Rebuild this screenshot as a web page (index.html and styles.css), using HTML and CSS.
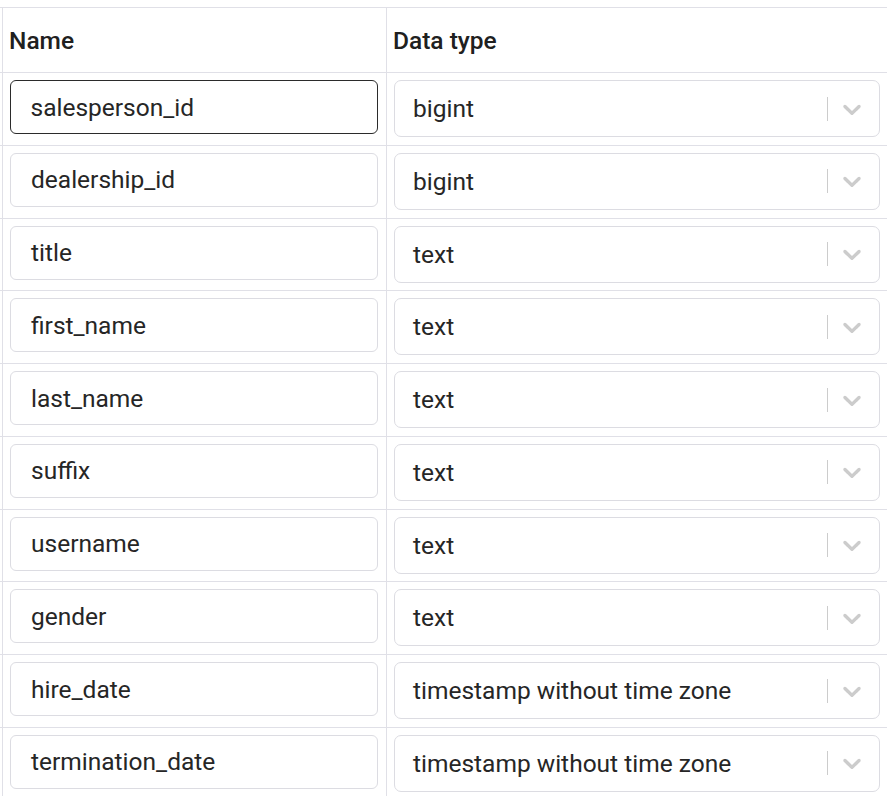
FILE: index.html
```html
<!DOCTYPE html>
<html lang="en">
<head>
<meta charset="utf-8">
<title>Columns</title>
<link rel="stylesheet" href="styles.css">
</head>
<body>
<div class="table">
  <div class="row head">
    <div class="gutter"></div>
    <div class="cell hcell">Name</div>
    <div class="cell hcell">Data type</div>
  </div>

  <div class="row">
    <div class="gutter"></div>
    <div class="cell"><div class="input focused">salesperson_id</div></div>
    <div class="cell"><div class="select"><span class="value">bigint</span><span class="indicators"><span class="sep"></span><svg class="chev" viewBox="0 0 20 20"><path d="M4.516 7.548c0.436-0.446 1.043-0.481 1.576 0l3.908 3.747 3.908-3.747c0.533-0.481 1.141-0.446 1.574 0 0.436 0.445 0.408 1.197 0 1.615-0.406 0.418-4.695 4.502-4.695 4.502-0.217 0.223-0.502 0.335-0.787 0.335s-0.57-0.112-0.789-0.335c0 0-4.287-4.084-4.695-4.502s-0.436-1.17 0-1.615z"/></svg></span></div></div>
  </div>

  <div class="row">
    <div class="gutter"></div>
    <div class="cell"><div class="input">dealership_id</div></div>
    <div class="cell"><div class="select"><span class="value">bigint</span><span class="indicators"><span class="sep"></span><svg class="chev" viewBox="0 0 20 20"><path d="M4.516 7.548c0.436-0.446 1.043-0.481 1.576 0l3.908 3.747 3.908-3.747c0.533-0.481 1.141-0.446 1.574 0 0.436 0.445 0.408 1.197 0 1.615-0.406 0.418-4.695 4.502-4.695 4.502-0.217 0.223-0.502 0.335-0.787 0.335s-0.57-0.112-0.789-0.335c0 0-4.287-4.084-4.695-4.502s-0.436-1.17 0-1.615z"/></svg></span></div></div>
  </div>

  <div class="row">
    <div class="gutter"></div>
    <div class="cell"><div class="input">title</div></div>
    <div class="cell"><div class="select"><span class="value">text</span><span class="indicators"><span class="sep"></span><svg class="chev" viewBox="0 0 20 20"><path d="M4.516 7.548c0.436-0.446 1.043-0.481 1.576 0l3.908 3.747 3.908-3.747c0.533-0.481 1.141-0.446 1.574 0 0.436 0.445 0.408 1.197 0 1.615-0.406 0.418-4.695 4.502-4.695 4.502-0.217 0.223-0.502 0.335-0.787 0.335s-0.57-0.112-0.789-0.335c0 0-4.287-4.084-4.695-4.502s-0.436-1.17 0-1.615z"/></svg></span></div></div>
  </div>

  <div class="row">
    <div class="gutter"></div>
    <div class="cell"><div class="input">first_name</div></div>
    <div class="cell"><div class="select"><span class="value">text</span><span class="indicators"><span class="sep"></span><svg class="chev" viewBox="0 0 20 20"><path d="M4.516 7.548c0.436-0.446 1.043-0.481 1.576 0l3.908 3.747 3.908-3.747c0.533-0.481 1.141-0.446 1.574 0 0.436 0.445 0.408 1.197 0 1.615-0.406 0.418-4.695 4.502-4.695 4.502-0.217 0.223-0.502 0.335-0.787 0.335s-0.57-0.112-0.789-0.335c0 0-4.287-4.084-4.695-4.502s-0.436-1.17 0-1.615z"/></svg></span></div></div>
  </div>

  <div class="row">
    <div class="gutter"></div>
    <div class="cell"><div class="input">last_name</div></div>
    <div class="cell"><div class="select"><span class="value">text</span><span class="indicators"><span class="sep"></span><svg class="chev" viewBox="0 0 20 20"><path d="M4.516 7.548c0.436-0.446 1.043-0.481 1.576 0l3.908 3.747 3.908-3.747c0.533-0.481 1.141-0.446 1.574 0 0.436 0.445 0.408 1.197 0 1.615-0.406 0.418-4.695 4.502-4.695 4.502-0.217 0.223-0.502 0.335-0.787 0.335s-0.57-0.112-0.789-0.335c0 0-4.287-4.084-4.695-4.502s-0.436-1.17 0-1.615z"/></svg></span></div></div>
  </div>

  <div class="row">
    <div class="gutter"></div>
    <div class="cell"><div class="input">suffix</div></div>
    <div class="cell"><div class="select"><span class="value">text</span><span class="indicators"><span class="sep"></span><svg class="chev" viewBox="0 0 20 20"><path d="M4.516 7.548c0.436-0.446 1.043-0.481 1.576 0l3.908 3.747 3.908-3.747c0.533-0.481 1.141-0.446 1.574 0 0.436 0.445 0.408 1.197 0 1.615-0.406 0.418-4.695 4.502-4.695 4.502-0.217 0.223-0.502 0.335-0.787 0.335s-0.57-0.112-0.789-0.335c0 0-4.287-4.084-4.695-4.502s-0.436-1.17 0-1.615z"/></svg></span></div></div>
  </div>

  <div class="row">
    <div class="gutter"></div>
    <div class="cell"><div class="input">username</div></div>
    <div class="cell"><div class="select"><span class="value">text</span><span class="indicators"><span class="sep"></span><svg class="chev" viewBox="0 0 20 20"><path d="M4.516 7.548c0.436-0.446 1.043-0.481 1.576 0l3.908 3.747 3.908-3.747c0.533-0.481 1.141-0.446 1.574 0 0.436 0.445 0.408 1.197 0 1.615-0.406 0.418-4.695 4.502-4.695 4.502-0.217 0.223-0.502 0.335-0.787 0.335s-0.57-0.112-0.789-0.335c0 0-4.287-4.084-4.695-4.502s-0.436-1.17 0-1.615z"/></svg></span></div></div>
  </div>

  <div class="row">
    <div class="gutter"></div>
    <div class="cell"><div class="input">gender</div></div>
    <div class="cell"><div class="select"><span class="value">text</span><span class="indicators"><span class="sep"></span><svg class="chev" viewBox="0 0 20 20"><path d="M4.516 7.548c0.436-0.446 1.043-0.481 1.576 0l3.908 3.747 3.908-3.747c0.533-0.481 1.141-0.446 1.574 0 0.436 0.445 0.408 1.197 0 1.615-0.406 0.418-4.695 4.502-4.695 4.502-0.217 0.223-0.502 0.335-0.787 0.335s-0.57-0.112-0.789-0.335c0 0-4.287-4.084-4.695-4.502s-0.436-1.17 0-1.615z"/></svg></span></div></div>
  </div>

  <div class="row">
    <div class="gutter"></div>
    <div class="cell"><div class="input">hire_date</div></div>
    <div class="cell"><div class="select"><span class="value">timestamp without time zone</span><span class="indicators"><span class="sep"></span><svg class="chev" viewBox="0 0 20 20"><path d="M4.516 7.548c0.436-0.446 1.043-0.481 1.576 0l3.908 3.747 3.908-3.747c0.533-0.481 1.141-0.446 1.574 0 0.436 0.445 0.408 1.197 0 1.615-0.406 0.418-4.695 4.502-4.695 4.502-0.217 0.223-0.502 0.335-0.787 0.335s-0.57-0.112-0.789-0.335c0 0-4.287-4.084-4.695-4.502s-0.436-1.17 0-1.615z"/></svg></span></div></div>
  </div>

  <div class="row">
    <div class="gutter"></div>
    <div class="cell"><div class="input">termination_date</div></div>
    <div class="cell"><div class="select"><span class="value">timestamp without time zone</span><span class="indicators"><span class="sep"></span><svg class="chev" viewBox="0 0 20 20"><path d="M4.516 7.548c0.436-0.446 1.043-0.481 1.576 0l3.908 3.747 3.908-3.747c0.533-0.481 1.141-0.446 1.574 0 0.436 0.445 0.408 1.197 0 1.615-0.406 0.418-4.695 4.502-4.695 4.502-0.217 0.223-0.502 0.335-0.787 0.335s-0.57-0.112-0.789-0.335c0 0-4.287-4.084-4.695-4.502s-0.436-1.17 0-1.615z"/></svg></span></div></div>
  </div>
</div>
</body>
</html>
```

FILE: styles.css
```css
html, body {
  margin: 0;
  padding: 0;
  background: #ffffff;
}

body {
  font-family: Roboto, "Liberation Sans", sans-serif;
  color: #222222;
  overflow: hidden;
}

.table {
  margin-top: 7px;
  width: 887px;
  border-top: 1px solid #e0e0e7;
}

.row {
  display: grid;
  grid-template-columns: 2px 384px 501px;
  border-bottom: 1px solid #e0e0e7;
}

.cell {
  border-left: 1px solid #e0e0e7;
  padding: 7px 8px 7.75px 7px;
}

.head .hcell {
  height: 64px;
  padding: 0 6px;
  display: flex;
  align-items: center;
  font-size: 24.5px;
  font-weight: 500;
  color: #202020;
}

.input {
  box-sizing: border-box;
  width: 368px;
  height: 54px;
  border: 1px solid #dcdce2;
  border-radius: 6px;
  padding: 0 20px;
  display: flex;
  align-items: center;
  font-size: 24.5px;
  color: #262626;
}

.input.focused {
  border: 1.5px solid #2b2b2b;
  padding-left: 19.5px;
}

.select {
  box-sizing: border-box;
  width: 486px;
  height: 57px;
  border: 1px solid #dcdce2;
  border-radius: 7px;
  display: flex;
  align-items: center;
  font-size: 24.5px;
  color: #262626;
}

.value {
  flex: 1;
  padding-left: 18px;
}

.indicators {
  display: flex;
  align-items: center;
  height: 100%;
}

.sep {
  width: 1.5px;
  height: 24px;
  background: #cccccc;
}

.chev {
  width: 30px;
  height: 30px;
  margin-left: 8.5px;
  margin-right: 12.5px;
  fill: #cccccc;
}
```
